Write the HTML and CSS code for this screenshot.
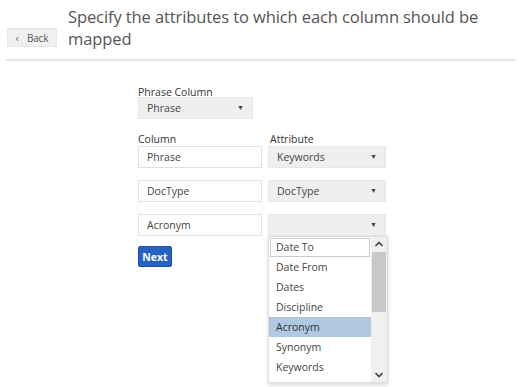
FILE: index.html
```html
<!DOCTYPE html>
<html lang="en">
<head>
    <meta charset="UTF-8">
    <meta name="viewport" content="width=device-width, initial-scale=1.0">
    <title>Column Mapping</title>
    <link rel="stylesheet" href="styles.css">
</head>
<body>
    <div class="page-header">
        <button class="back-btn"><span class="chev">&lsaquo;</span> Back</button>
        <h1>Specify the attributes to which each column should be mapped</h1>
    </div>
    <hr class="rule">

    <div class="mapping">
        <div class="field">
            <label class="lbl">Phrase Column</label>
            <div class="select select-small">Phrase<span class="caret">&#9660;</span></div>
        </div>

        <div class="grid">
            <div class="lbl">Column</div>
            <div class="lbl lbl-attr">Attribute</div>

            <div class="input">Phrase</div>
            <div class="select">Keywords<span class="caret">&#9660;</span></div>

            <div class="input">DocType</div>
            <div class="select">DocType<span class="caret">&#9660;</span></div>

            <div class="input">Acronym</div>
            <div class="select open"><span class="caret">&#9660;</span>
                <div class="dropdown">
                    <ul class="options">
                        <li class="focused">Date To</li>
                        <li>Date From</li>
                        <li>Dates</li>
                        <li>Discipline</li>
                        <li class="selected">Acronym</li>
                        <li>Synonym</li>
                        <li>Keywords</li>
                    </ul>
                    <div class="scrollbar">
                        <svg class="arrow up" width="16" height="12" viewBox="0 0 16 12"><path d="M4.5 8 L8 4.5 L11.5 8" fill="none" stroke="#444" stroke-width="1.6"/></svg>
                        <div class="thumb"></div>
                        <svg class="arrow down" width="16" height="12" viewBox="0 0 16 12"><path d="M4.5 4 L8 7.5 L11.5 4" fill="none" stroke="#444" stroke-width="1.6"/></svg>
                    </div>
                </div>
            </div>
        </div>

        <button class="next-btn">Next</button>
    </div>
</body>
</html>
```

FILE: styles.css
```css
body {
    margin: 0;
    min-height: 387px;
    font-family: "Open Sans", "Noto Sans", sans-serif;
    color: #333;
    background: #fff;
}
.page-header {
    display: flex;
    align-items: flex-start;
    padding: 6px 0 0 7px;
}
.back-btn {
    margin-top: 22px;
    width: 50px;
    height: 19px;
    padding: 0;
    background: #f0f0f0;
    border: 1px solid #e6e6e6;
    color: #555;
    font-family: inherit;
    font-size: 10px;
    letter-spacing: -0.2px;
}
.back-btn .chev {
    margin-right: 6px;
}
h1 {
    margin: 0 0 0 11px;
    font-size: 16.5px;
    font-weight: normal;
    line-height: 22px;
    letter-spacing: -0.1px;
    color: #555;
    width: 420px;
}
.rule {
    margin: 9px 10px 0 6px;
    border: 0;
    height: 2px;
    background: #e6e6e6;
}
.mapping {
    margin: 25px 0 0 138px;
    font-size: 10.5px;
}
.lbl {
    display: block;
    height: 12px;
    line-height: 12px;
    color: #333;
    margin-bottom: -1px;
}
.select {
    position: relative;
    box-sizing: border-box;
    height: 22px;
    line-height: 20px;
    padding: 0 8px;
    background: #efefef;
    border: 1px solid #e8e8e8;
    color: #444;
}
.select-small {
    width: 115px;
}
.caret {
    position: absolute;
    right: 8px;
    top: 0;
    font-size: 7px;
    color: #444;
}
.grid {
    margin-top: 14px;
    display: grid;
    grid-template-columns: 124px 118px;
    column-gap: 6px;
    row-gap: 12px;
    width: 248px;
}
.grid .lbl {
    margin-bottom: -11px;
}
.lbl-attr {
    padding-left: 2px;
}
.input {
    box-sizing: border-box;
    height: 22px;
    line-height: 20px;
    padding: 0 8px;
    border: 1px solid #e0e0e0;
    background: #fff;
    color: #444;
}
.next-btn {
    margin-top: 10px;
    width: 34px;
    height: 21px;
    padding: 0;
    border: 1px solid #1b52a8;
    border-radius: 2px;
    background: #2562c2;
    color: #fff;
    font-family: inherit;
    font-size: 10.5px;
    font-weight: bold;
}
.dropdown {
    position: absolute;
    left: -1px;
    top: 21px;
    width: 118px;
    height: 145px;
    background: #fff;
    border: 1px solid #ddd;
    box-shadow: 0 2px 4px rgba(0, 0, 0, 0.15);
    display: flex;
    z-index: 2;
}
.options {
    list-style: none;
    margin: 0;
    padding: 0;
    flex: 1;
}
.options li {
    height: 20px;
    line-height: 20px;
    padding: 0 7px;
    color: #444;
}
.options li.focused {
    margin: 1px 1px 0 1px;
    height: 17px;
    line-height: 17px;
    padding: 0 5px;
    border: 1px solid #ccc;
}
.options li.selected {
    background: #b0c8e2;
    color: #333;
}
.scrollbar {
    position: relative;
    width: 16px;
    background: #f0f0f0;
}
.thumb {
    position: absolute;
    left: 1px;
    right: 1px;
    top: 15px;
    height: 60px;
    background: #c8c8c8;
}
.arrow {
    position: absolute;
    left: 0;
}
.arrow.up {
    top: 1px;
}
.arrow.down {
    bottom: 1px;
}
```
